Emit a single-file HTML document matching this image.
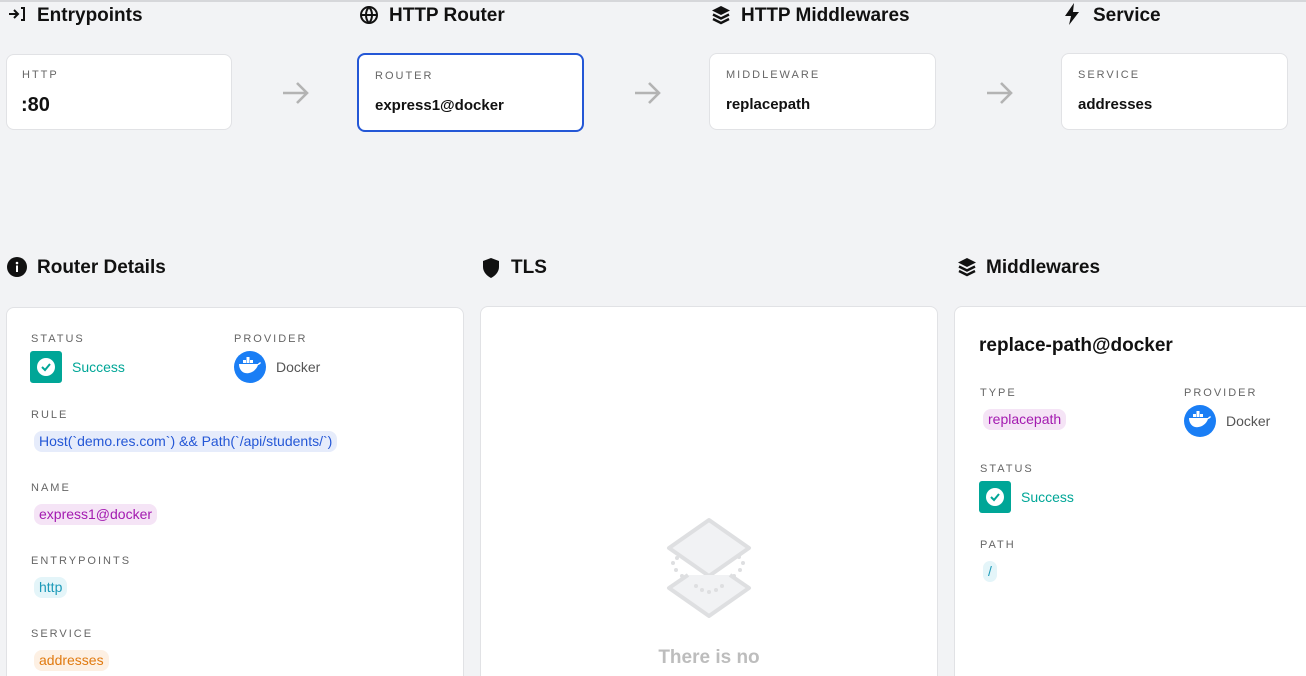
<!DOCTYPE html>
<html style="width:1306px;height:676px;overflow:hidden"><head><meta charset="utf-8"><style>
*{margin:0;padding:0;box-sizing:border-box}
body{width:1306px;height:676px;overflow:hidden;background:#f2f3f5;font-family:"Liberation Sans",sans-serif;color:#111;position:relative}
.a{position:absolute}
.h{font-size:19px;font-weight:bold;white-space:nowrap}
.card{position:absolute;background:#fff;border:1px solid #e1e2e5;border-radius:8px}
.lab{position:absolute;font-size:11px;letter-spacing:2px;color:#666;white-space:nowrap}
.val{position:absolute;font-size:15px;font-weight:bold;white-space:nowrap}
.chip{position:absolute;height:21px;line-height:21px;border-radius:8px;padding:0 5px;font-size:14px;white-space:nowrap}
.ok{position:absolute;width:32px;height:32px;border-radius:3px;background:#00a697}
.ok::after{content:"";position:absolute;left:7px;top:7px;width:18px;height:18px;border-radius:50%;background:#fff}
.dock{position:absolute;width:32px;height:32px;border-radius:50%;background:#1a7ef5}
.t{position:absolute;font-size:14px;white-space:nowrap}
</style></head><body>
<div class="a" style="left:0;top:0;width:1306px;height:2px;background:#d6d7da"></div>

<svg class="a" style="left:8px;top:6px" width="18" height="16" viewBox="0 0 18 16" fill="none" stroke="#111" stroke-width="2"><path d="M1 8h9M6 4l4 4-4 4M13 2h3v12h-3"/></svg>
<div class="a h" style="left:37px;top:5px">Entrypoints</div>
<svg class="a" style="left:359px;top:5px" width="20" height="20" viewBox="0 0 20 20" fill="none" stroke="#111" stroke-width="2"><circle cx="10" cy="10" r="8"/><path d="M2 10h16M10 2c-4 4-4 12 0 16M10 2c4 4 4 12 0 16"/></svg>
<div class="a h" style="left:389px;top:5px">HTTP Router</div>
<svg class="a" style="left:711px;top:5px" width="20" height="20" viewBox="0 0 20 20" fill="#111"><path d="M10 1l9 4.5-9 4.5-9-4.5z"/><path d="M2 9.5l8 4 8-4" stroke="#111" stroke-width="2.4" fill="none"/><path d="M2 14l8 4 8-4" stroke="#111" stroke-width="2.4" fill="none"/></svg>
<div class="a h" style="left:741px;top:5px">HTTP Middlewares</div>
<svg class="a" style="left:1064px;top:3px" width="16" height="22" viewBox="0 0 16 22" fill="#111"><path d="M10 0L1 13h6l-2 9 10-13H9z"/></svg>
<div class="a h" style="left:1093px;top:5px">Service</div>

<div class="card" style="left:6px;top:54px;width:226px;height:76px"></div>
<div class="lab" style="left:22px;top:69px">HTTP</div>
<div class="val" style="left:21px;top:94px;font-size:20px">:80</div>
<div class="card" style="left:357px;top:53px;width:227px;height:79px;border:2px solid #2457d6"></div>
<div class="lab" style="left:375px;top:70px">ROUTER</div>
<div class="val" style="left:375px;top:97px">express1@docker</div>
<div class="card" style="left:709px;top:53px;width:227px;height:77px"></div>
<div class="lab" style="left:726px;top:69px">MIDDLEWARE</div>
<div class="val" style="left:726px;top:96px">replacepath</div>
<div class="card" style="left:1061px;top:53px;width:227px;height:77px"></div>
<div class="lab" style="left:1078px;top:69px">SERVICE</div>
<div class="val" style="left:1078px;top:96px">addresses</div>
<svg class="a" style="left:282px;top:81px" width="28" height="24" viewBox="0 0 28 24" fill="none" stroke="#b3b3b3" stroke-width="2.6"><path d="M1 12h24M15 2l10 10-10 10"/></svg>
<svg class="a" style="left:634px;top:81px" width="28" height="24" viewBox="0 0 28 24" fill="none" stroke="#b3b3b3" stroke-width="2.6"><path d="M1 12h24M15 2l10 10-10 10"/></svg>
<svg class="a" style="left:986px;top:81px" width="28" height="24" viewBox="0 0 28 24" fill="none" stroke="#b3b3b3" stroke-width="2.6"><path d="M1 12h24M15 2l10 10-10 10"/></svg>

<svg class="a" style="left:7px;top:257px" width="20" height="20" viewBox="0 0 20 20"><circle cx="10" cy="10" r="10" fill="#111"/><rect x="9" y="8.5" width="2" height="6.5" fill="#fff"/><circle cx="10" cy="6" r="1.3" fill="#fff"/></svg>
<div class="a h" style="left:37px;top:257px">Router Details</div>
<svg class="a" style="left:482px;top:257px" width="18" height="22" viewBox="0 0 18 22" fill="#111"><path d="M9 1L1 4v6c0 5 4 9 8 11 4-2 8-6 8-11V4z"/></svg>
<div class="a h" style="left:511px;top:257px">TLS</div>
<svg class="a" style="left:957px;top:257px" width="20" height="20" viewBox="0 0 20 20" fill="#111"><path d="M10 1l9 4.5-9 4.5-9-4.5z"/><path d="M2 9.5l8 4 8-4" stroke="#111" stroke-width="2.4" fill="none"/><path d="M2 14l8 4 8-4" stroke="#111" stroke-width="2.4" fill="none"/></svg>
<div class="a h" style="left:986px;top:257px">Middlewares</div>

<div class="card" style="left:6px;top:307px;width:458px;height:400px"></div>
<div class="lab" style="left:31px;top:333px">STATUS</div>
<div class="ok" style="left:30px;top:351px"></div>
<svg class="a" style="left:39px;top:361px" width="14" height="12" viewBox="0 0 14 12"><path d="M3 6l3 3 5-6" stroke="#00a697" stroke-width="2" fill="none"/></svg>
<div class="t" style="left:72px;top:359px;color:#00a697">Success</div>
<div class="lab" style="left:234px;top:333px">PROVIDER</div>
<div class="dock" style="left:234px;top:351px"></div>
<svg class="a" style="left:238px;top:357px" width="24" height="20" viewBox="0 0 24 20" fill="#fff"><rect x="5" y="3" width="3" height="3"/><rect x="8.5" y="3" width="3" height="3"/><rect x="8.5" y="0" width="3" height="3"/><rect x="12" y="3" width="3" height="3"/><path d="M1 7h19c1-2 3-2 3-1-1 1-2 2-3 2-2 6-8 9-13 8-4-1-6-5-6-9z"/></svg>
<div class="t" style="left:276px;top:359px;color:#555">Docker</div>
<div class="lab" style="left:31px;top:409px">RULE</div>
<div class="chip" style="left:34px;top:431px;background:#e6ecfb;color:#2457d6">Host(`demo.res.com`) &amp;&amp; Path(`/api/students/`)</div>
<div class="lab" style="left:31px;top:482px">NAME</div>
<div class="chip" style="left:34px;top:504px;background:#f5e4f6;color:#a31ab0">express1@docker</div>
<div class="lab" style="left:31px;top:555px">ENTRYPOINTS</div>
<div class="chip" style="left:34px;top:577px;background:#e4f5f9;color:#1d9ab8">http</div>
<div class="lab" style="left:31px;top:628px">SERVICE</div>
<div class="chip" style="left:34px;top:650px;background:#fdf0e3;color:#e07a10">addresses</div>

<div class="card" style="left:480px;top:306px;width:458px;height:400px"></div>
<svg class="a" style="left:662px;top:516px" width="94" height="102" viewBox="0 0 94 102" fill="#f1f2f4" stroke="#dedfe1" stroke-width="4" stroke-linejoin="round"><path d="M47 4l40 28-40 28L7 32z"/><path d="M26 59L7 72l40 28 40-28-19-13" /><g fill="#dedfe1" stroke="none"><circle cx="11" cy="47" r="2"/><circle cx="14" cy="54" r="2"/><circle cx="20" cy="60" r="2"/><circle cx="81" cy="47" r="2"/><circle cx="78" cy="54" r="2"/><circle cx="72" cy="60" r="2"/><circle cx="34" cy="70" r="2"/><circle cx="40" cy="74" r="2"/><circle cx="47" cy="76" r="2"/><circle cx="54" cy="74" r="2"/><circle cx="60" cy="70" r="2"/><circle cx="15" cy="42" r="2"/><circle cx="77" cy="41" r="2"/></g></svg>
<div class="a" style="left:560px;top:644px;width:298px;text-align:center;font-size:19px;font-weight:bold;color:#bdbdbd;line-height:28px">There is no<br>TLS configured</div>

<div class="card" style="left:954px;top:306px;width:400px;height:400px"></div>
<div class="a h" style="left:979px;top:335px">replace-path@docker</div>
<div class="lab" style="left:980px;top:387px">TYPE</div>
<div class="chip" style="left:983px;top:409px;background:#f5e4f6;color:#a31ab0">replacepath</div>
<div class="lab" style="left:1184px;top:387px">PROVIDER</div>
<div class="dock" style="left:1184px;top:405px"></div>
<svg class="a" style="left:1188px;top:411px" width="24" height="20" viewBox="0 0 24 20" fill="#fff"><rect x="5" y="3" width="3" height="3"/><rect x="8.5" y="3" width="3" height="3"/><rect x="8.5" y="0" width="3" height="3"/><rect x="12" y="3" width="3" height="3"/><path d="M1 7h19c1-2 3-2 3-1-1 1-2 2-3 2-2 6-8 9-13 8-4-1-6-5-6-9z"/></svg>
<div class="t" style="left:1226px;top:413px;color:#555">Docker</div>
<div class="lab" style="left:980px;top:463px">STATUS</div>
<div class="ok" style="left:979px;top:481px"></div>
<svg class="a" style="left:988px;top:491px" width="14" height="12" viewBox="0 0 14 12"><path d="M3 6l3 3 5-6" stroke="#00a697" stroke-width="2" fill="none"/></svg>
<div class="t" style="left:1021px;top:489px;color:#00a697">Success</div>
<div class="lab" style="left:980px;top:539px">PATH</div>
<div class="chip" style="left:983px;top:561px;background:#e4f5f9;color:#1d9ab8;padding:0 5px">/</div>
</body></html>
